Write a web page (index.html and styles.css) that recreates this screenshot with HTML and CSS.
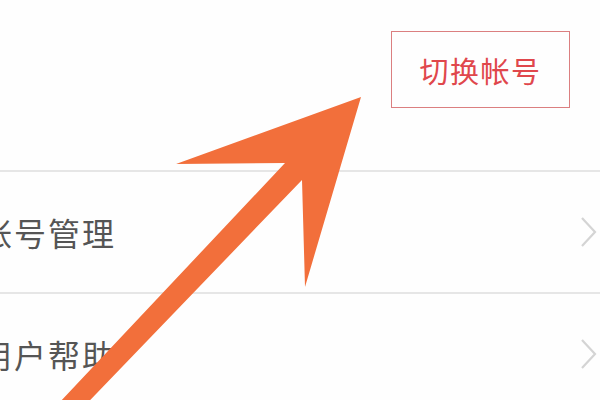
FILE: index.html
```html
<!DOCTYPE html>
<html lang="zh">
<head>
<meta charset="utf-8">
<link rel="stylesheet" href="styles.css">
</head>
<body>
<div class="page">
  <div class="header">
    <div class="switch-btn">切换帐号</div>
  </div>
  <div class="list">
    <div class="row">
      <span class="row-text">帐号管理</span>
      <svg class="chev" width="18" height="32" viewBox="0 0 18 32"><polyline points="2,2 15,16 2,30" fill="none" stroke="#d4d4d4" stroke-width="2.2"/></svg>
    </div>
    <div class="row">
      <span class="row-text">用户帮助</span>
      <svg class="chev" width="18" height="32" viewBox="0 0 18 32"><polyline points="2,2 15,16 2,30" fill="none" stroke="#d4d4d4" stroke-width="2.2"/></svg>
    </div>
  </div>
  <svg class="arrow" width="600" height="400" viewBox="0 0 600 400">
    <polygon points="361,97 176,164 285,163 43,420 71,420 302,180 305,287" fill="#f26f3b"/>
  </svg>
</div>
</body>
</html>
```
FILE: styles.css
```css
html, body {
  margin: 0;
  padding: 0;
  background: #ffffff;
}
.page {
  position: relative;
  width: 600px;
  height: 400px;
  overflow: hidden;
  font-family: "Noto Sans CJK SC", "Noto Sans", sans-serif;
  background: #fefefe;
}
.header {
  height: 170px;
  display: flex;
  justify-content: flex-end;
  align-items: flex-start;
  padding-right: 30px;
  box-sizing: border-box;
  padding-top: 31px;
}
.switch-btn {
  width: 179px;
  height: 77px;
  box-sizing: border-box;
  border: 1px solid #db7f80;
  color: #e0474c;
  font-size: 29px;
  letter-spacing: 1.5px;
  display: flex;
  align-items: center;
  justify-content: center;
}
.list {
  display: flex;
  flex-direction: column;
}
.row {
  height: 120px;
  border-top: 2px solid #e6e6e6;
  display: flex;
  align-items: center;
  justify-content: space-between;
  padding-right: 2px;
}
.row-text {
  margin-left: -20px;
  font-size: 32px;
  letter-spacing: 2px;
  color: #555555;
}
.chev {
  display: block;
}
.arrow {
  position: absolute;
  left: 0;
  top: 0;
}
```
